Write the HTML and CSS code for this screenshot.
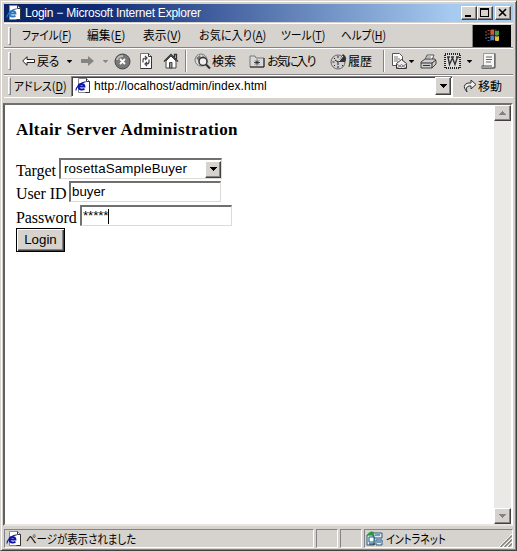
FILE: index.html
```html
<!DOCTYPE html>
<html lang="ja">
<head>
<meta charset="utf-8">
<title>Login - Microsoft Internet Explorer</title>
<link rel="stylesheet" href="styles.css">
</head>
<body>
<svg class="defs" aria-hidden="true">
  <defs>
    <symbol id="page-e" viewBox="0 0 16 16">
      <path d="M3.500 .5h8l3 3v11h-11z" fill="#fff" stroke="#8a8a8a"/>
      <path d="M11.500 .5v3h3v11h-4" fill="none" stroke="#333"/>
      <path d="M9.400 10.600C7.800 12.200 3.600 12 3.500 8.800 3.500 5.200 9.400 4.800 9.400 8.500H4.500" fill="none" stroke="currentColor" stroke-width="2"/>
      <path d="M1.200 12.500C.3 10 5.500 4 10.800 3.800" fill="none" stroke="currentColor" stroke-width="1.100"/>
    </symbol>
    <symbol id="down" viewBox="0 0 7 4"><path d="M0 0h7v1H6v1H5v1H4v1H3V3H2V2H1V1H0z" fill="currentColor"/></symbol>
  </defs>
</svg>
<div class="window">
  <header class="titlebar">
    <svg class="i16 light-e"><use href="#page-e"/></svg>
    <span class="title">Login − Microsoft Internet Explorer</span>
    <span class="caption"><svg viewBox="0 0 12 10"><path d="M2 7h6v2H2z"/></svg></span>
    <span class="caption"><svg viewBox="0 0 12 10"><path d="M1 0h9v9H1zM2 2v6h7V2z" fill-rule="evenodd"/></svg></span>
    <span class="caption close"><svg viewBox="0 0 12 10"><path d="M2 1l7 7M9 1L2 8" stroke="#000" stroke-width="1.600"/></svg></span>
  </header>
  <nav class="menubar">
    <i class="grip"></i>
    <span class="m1">ファイル(<u>F</u>)</span>
    <span class="m2">編集(<u>E</u>)</span>
    <span class="m3">表示(<u>V</u>)</span>
    <span class="m4">お気に入り(<u>A</u>)</span>
    <span class="m5">ツール(<u>T</u>)</span>
    <span class="m6">ヘルプ(<u>H</u>)</span>
    <div class="throbber">
      <svg viewBox="0 0 38 22"><path d="M17 5q4-2 8 0v11q-4-2-8 0z" fill="#222"/><path d="M17.500 5q2-1 3.500 0v5q-1.500-1-3.500 0z" fill="#d65a2c"/><path d="M22 5.500q1.500 1 4 0v4.500q-2 1-4 0z" fill="#4d9b43"/><path d="M17.500 11q2-1 3.500 0v4.500q-1.500-1-3.500 0z" fill="#4a80cc"/><path d="M22 11q1.500 1 4 0v4.500q-2 1-4 0z" fill="#dfc33c"/><path d="M12 7h2M14.500 5.500h2M12 10h2M14.500 9h2" stroke="#a04d48"/><path d="M12 13h2M14.500 12.500h2M14.500 15.500h2" stroke="#466da5"/></svg>
    </div>
  </nav>
  <div class="toolbar">
    <i class="grip"></i>
    <svg width="13" height="12" viewBox="0 0 13 12"><path d="M.7 6L5 1.700V4.500h7.500v3H5v2.800z" fill="#fff" stroke="#222"/></svg>
    <span class="t-back">戻る</span>
    <svg class="tri"><use href="#down"/></svg>
    <svg width="14" height="12" viewBox="0 0 14 12"><path d="M0 4h7V1l6 5-6 5V8H0z" fill="#858585"/></svg>
    <svg class="tri dim"><use href="#down"/></svg>
    <svg width="17" height="17" viewBox="0 0 17 17"><circle cx="8.500" cy="8.500" r="7.500" fill="#777" stroke="#444"/><path d="M3 7q1-4 6-4" stroke="#bbb" fill="none" stroke-width="2"/><path d="M6 6l5 5M11 6l-5 5" stroke="#fff" stroke-width="1.800"/></svg>
    <svg width="14" height="16" viewBox="0 0 14 16"><path d="M1.500 .5h8l3 3v12h-11z" fill="#fff" stroke="#777"/><path d="M9.500 .5v3h3v12h-11" fill="none" stroke="#333"/><path d="M4 9.500V7q0-2 3-2M6 3l2 2-2 2M10 6.500V9q0 2-3 2M8 9l-2 2 2 2" fill="none" stroke="#444" stroke-width="1.200"/></svg>
    <svg width="16" height="16" viewBox="0 0 16 16"><path d="M3 8v7h10V8L8 3z" fill="#fff" stroke="#444"/><path d="M1 8.500l7-7 7 7M11.500 4V1.500h2V6" fill="none" stroke="#333" stroke-width="1.300"/><path d="M6.500 9.500h2.500v5.500H6.500z" fill="#999" stroke="#444"/></svg>
    <i class="sep"></i>
    <svg width="17" height="17" viewBox="0 0 17 17"><circle cx="7" cy="7" r="6" fill="#ddd" stroke="#777"/><path d="M2 5l4-3 1 3-2 3zM8 2l4 3-2 2z" fill="#777"/><circle cx="9" cy="8.500" r="4" fill="#eee" stroke="#333" stroke-width="1.500"/><path d="M12 11.500l4 4" stroke="#333" stroke-width="2.200"/></svg>
    <span>検索</span>
    <svg width="16" height="14" viewBox="0 0 16 14"><path d="M1 4V2h5l1 2h8v9H1z" fill="#d9d9d9" stroke="#777"/><path d="M15 4v9H1" fill="none" stroke="#222"/><path d="M8 5.500v6M5 8.500h6M6 6.500l4 4M10 6.500l-4 4" stroke="#222" stroke-width=".8"/></svg>
    <span class="t-fav">お気に入り</span>
    <svg width="17" height="17" viewBox="0 0 17 17"><circle cx="8" cy="9" r="7" fill="#d0d0d0" stroke="#666"/><path d="M8 9l5-8q5 3 2 8z" fill="#333"/><path d="M8 3v2M2.500 9h2M8 13v2M4 5l1 1M4 13l1-1M12 12l1 1M5 7l3 2v3" stroke="#222" fill="none"/><path d="M9 8l4-5" stroke="#fff"/></svg>
    <span>履歴</span>
    <i class="sep"></i>
    <svg width="17" height="17" viewBox="0 0 17 17"><path d="M1.500 .5h7l3 3v9h-10z" fill="#fff" stroke="#555"/><path d="M3 4h4M3 6h6M3 8h4" stroke="#777"/><path d="M5.500 10.500l5-4 5 4v5h-10z" fill="#eee" stroke="#333"/><path d="M5.500 15.500l5-4 5 4M5.500 11l5 3 5-3" fill="none" stroke="#777"/></svg>
    <svg class="tri"><use href="#down"/></svg>
    <svg width="17" height="15" viewBox="0 0 17 15"><path d="M5 6l2-5h7l-2 5z" fill="#fff" stroke="#555"/><path d="M1 8l4-3h10l1 2v3l-4 4H1z" fill="#ccc" stroke="#444"/><path d="M1 9h11l4-3M12 9v5M3 11.500h7" stroke="#333" fill="none"/><path d="M7 3h4M6 5h4" stroke="#777"/></svg>
    <svg class="word" width="17" height="16" viewBox="0 0 17 16"><path d="M1 1h15v14H1z" fill="#ddd" stroke="#222" stroke-width="2" stroke-dasharray="1 1"/><path d="M3 4h3M4 4l1.500 7.500L8.500 5 11 11.500 13.500 4M7 4h3M12 4h3" stroke="#333" stroke-width="1.400" fill="none"/></svg>
    <svg class="tri"><use href="#down"/></svg>
    <svg width="16" height="16" viewBox="0 0 16 16"><path d="M2.500 .5h11v12q0 3-3 3H.5V13h2z" fill="#f5f5f5" stroke="#999"/><path d="M14 .5v14.500H1M1 13h10" fill="none" stroke="#444"/><path d="M5 4h6M5 6.500h6M5 9h5" stroke="#666"/></svg>
  </div>
  <div class="addressbar">
    <i class="grip"></i>
    <span class="addr-label">アドレス(<u>D</u>)</span>
    <div class="addr-field">
      <svg class="i16 blue-e"><use href="#page-e"/></svg>
      <span class="url">http://localhost/admin/index.html</span>
      <b class="drop"><svg class="tri"><use href="#down"/></svg></b>
    </div>
    <svg width="14" height="14" viewBox="0 0 14 14"><path d="M4 13Q-2 6 5 4h3V1l5 4.500L8 10V7H6Q2 8 4 13z" fill="#eee" stroke="#333"/></svg>
    <span class="go">移動</span>
  </div>
  <main class="viewport">
    <form class="page">
      <h1>Altair Server Administration</h1>
      <div class="row"><label>Target</label><div class="box select"><span>rosettaSampleBuyer</span><b class="drop"><svg class="tri"><use href="#down"/></svg></b></div></div>
      <div class="row user"><label class="uid">User ID</label><div class="box"><span>buyer</span></div></div>
      <div class="row pass"><label class="pw">Password</label><div class="box"><span class="stars">*****</span><i class="caret"></i></div></div>
      <div class="login">Login</div>
    </form>
    <div class="scroll">
      <b class="sbtn"><svg class="tri up"><use href="#down"/></svg></b>
      <b class="sbtn"><svg class="tri"><use href="#down"/></svg></b>
    </div>
  </main>
  <footer class="status">
    <div class="pane"><svg class="i16 blue-e"><use href="#page-e"/></svg><span class="done">ページが表示されました</span></div>
    <div class="pane"></div>
    <div class="pane"></div>
    <div class="pane zone">
      <svg width="17" height="16" viewBox="0 0 17 16"><path d="M1 4h7v10H1zM7 2h9v5H7zM10 9h6v5h-6z" fill="#dceaf2" stroke="#285a80"/><path d="M3 6h5v5H3z" fill="#fff" stroke="#168"/><path d="M9 4h5M11 11h4" stroke="#248"/><path d="M1 4q3-5 7-3l-1 3z" fill="#279a38"/><path d="M3 13h6" stroke="#222"/></svg>
      <span class="intra">イントラネット</span>
      <svg class="size" width="13" height="13" viewBox="0 0 13 13"><path d="M0 13L13 0M4 13l9-9M8 13l5-5" stroke="#fff"/><path d="M1.500 13L13 1.500M5.500 13L13 5.500M9.500 13L13 9.500" stroke="#808080" stroke-width="1.300"/></svg>
    </div>
  </footer>
</div>
</body>
</html>
```
FILE: styles.css
```css
* { box-sizing: border-box; }
body { margin: 0; overflow: hidden; color: #000; }
.defs { position: absolute; width: 0; height: 0; }
svg { display: block; flex: none; }
.window {
  width: 517px; height: 551px; padding: 3px 3px 1px 2px;
  display: flex; flex-direction: column;
  background: #d6d3ce;
  border: 1px solid #d6d3ce; border-right-color: #424142; border-bottom-color: #424142;
  box-shadow: inset 1px 1px #fff, inset -1px -1px #848284;
  font: 12px/15px "Noto Sans CJK JP", sans-serif;
}
.window span { white-space: nowrap; }
.i16 { width: 16px; height: 16px; }
.light-e { color: #2878bd; }
.blue-e { color: #1115a5; }
.tri { width: 5px; height: 3px; }
.dim { color: #858585; }
.grip { display: block; width: 3px; height: 18px; border: 1px solid; border-color: #fff #848284 #848284 #fff; }

.titlebar {
  height: 18px; margin: 0 0 1px 1px; padding: 0 2px; display: flex; flex: none; align-items: center;
  background: linear-gradient(90deg, #0a246a, #0f2a75 18%, #a6caf0 88%);
}
.title { flex: 1; margin-left: 3px; color: #fff; font: 12px/16px "Liberation Sans", sans-serif; letter-spacing: -.23px; }
.caption { width: 16px; height: 14px; padding: 1px; background: #d6d3ce; border: 1px solid; border-color: #fff #424142 #424142 #fff; box-shadow: inset -1px -1px #848284; }
.caption svg { width: 12px; height: 10px; }
.close { margin-left: 2px; }

.menubar {
  height: 24px; flex: none; margin-left: 1px; padding-left: 4px; display: grid;
  grid-template-columns: 14px 65px 56px 56px 82px 60px 131px 39px; align-items: center;
  font-feature-settings: "palt"; border-top: 1px solid #fff;
}
.menubar > span { justify-self: start; transform-origin: 0 50%; position: relative; top: -1px; }
.m1 { transform: scaleX(.88); }
.m2, .m3 { transform: scaleX(.98); }
.m4 { transform: scaleX(.93); }
.m5 { transform: scaleX(.9); }
.m6 { transform: scaleX(.88); }
u { text-underline-offset: 2px; }
.throbber { height: 22px; background: #000; border-left: 1px solid #848284; }
.throbber svg { width: 38px; height: 22px; }

.toolbar {
  height: 27px; flex: none; margin-left: 1px; padding-left: 4px; display: grid;
  grid-template-columns: 14px 15px 30px 14px 22px 11px 25px 24px 22px 9px 18px 37px 18px 63px 18px 35px 8px 18px 11px 24px 23px 14px 16px;
  align-items: center; border-top: 1px solid #848284; box-shadow: inset 0 1px #fff;
}
.toolbar span { position: relative; top: -1px; }
.toolbar .t-back { letter-spacing: -1px; }
.toolbar .t-fav { letter-spacing: -2.300px; }
.sep { width: 2px; height: 22px; border-left: 1px solid #848284; border-right: 1px solid #fff; }

.addressbar {
  height: 24px; flex: none; margin-left: 1px; padding-left: 4px; display: grid;
  grid-template-columns: 5px 58px 392px 14px 1fr; align-items: center; justify-content: start;
  border-top: 1px solid #848284; border-bottom: 1px solid #fff; box-shadow: inset 0 1px #fff;
}
.addr-label { justify-self: start; margin-left: 1px; position: relative; top: -1px; font-feature-settings: "palt"; transform: scaleX(.9); transform-origin: 0 50%; }
.addr-field {
  width: 382px; height: 21px; padding: 1px; display: flex; align-items: center; background: #fff;
  border: 1px solid; border-color: #848284 #fff #fff #848284; box-shadow: inset 1px 1px #424142;
}
.addr-field .i16 { margin-left: 2px; }
.url { flex: 1; margin-left: 3px; font: 12px/16px "Liberation Sans", sans-serif; letter-spacing: .04px; }
.drop, .sbtn {
  width: 16px; height: 18px; display: flex; align-items: center; justify-content: center; background: #d6d3ce;
  border: 1px solid; border-color: #fff #424142 #424142 #fff; box-shadow: inset -1px -1px #848284;
}
.drop .tri { width: 7px; height: 4px; }
.go { margin-left: 1px; position: relative; top: -1px; }

.viewport {
  height: 423px; flex: none; margin-top: 5px; display: flex; background: #fff;
  border: 2px solid; border-color: #707070 #fff #e7e5e0 #606060;
}
.page { flex: 1; padding: 15px 0 0 11px; font: 16px/20px "Liberation Serif", serif; }
h1 { margin: 0 0 18px; font-size: 17px; line-height: 20px; letter-spacing: .43px; }
.row { height: 23px; display: flex; align-items: flex-start; }
.row label { width: 43px; padding-top: 3px; white-space: nowrap; letter-spacing: -.1px; }
.row .uid { width: 53px; }
.row .pw { width: 64px; }
.box {
  width: 152px; height: 21px; padding: 0 1px; display: flex; align-items: center;
  border: 2px solid; border-width: 2px 1px 1px 2px; border-color: #707070 #dedbd6 #dedbd6 #707070;
  font: 13.300px/16px "Liberation Sans", sans-serif;
}
.select { width: 163px; padding: 0 0 0 3px; }
.select span { flex: 1; letter-spacing: .15px; }
.select .drop { height: 17px; }
.row.pass { height: 24px; padding-top: 1px; }
.stars { letter-spacing: -.1px; }
.caret { width: 1px; height: 15px; background: #000; }
.login {
  width: 49px; height: 24px; text-align: center; background: #d6d3ce;
  border: 1px solid #000; box-shadow: inset 1px 1px #fff, inset -1px -1px #424142, inset -2px -2px #848284;
  font: 13.300px/21px "Liberation Sans", sans-serif;
}
.scroll { width: 17px; display: flex; flex-direction: column; justify-content: space-between; background: #ebe9e5; }
.sbtn { width: 17px; height: 16px; color: #848284; }
.sbtn .tri { width: 7px; height: 4px; }
.up { transform: rotate(180deg); }

.status { height: 19px; flex: none; margin: 3px 0 0 1px; display: grid; grid-template-columns: 310px 22px 22px 1fr; gap: 2px; }
.pane { min-width: 0; display: flex; align-items: center; border: 1px solid; border-color: #848284 #fff #fff #848284; font-feature-settings: "palt"; }
.done { margin-left: 4px; transform: scaleX(.87); transform-origin: 0 50%; }
.pane .i16 { margin-left: 1px; }
.zone { padding-left: 1px; }
.intra { margin-left: 3px; flex: 1; transform: scaleX(.84); transform-origin: 0 50%; }
.size { align-self: flex-end; }
```
